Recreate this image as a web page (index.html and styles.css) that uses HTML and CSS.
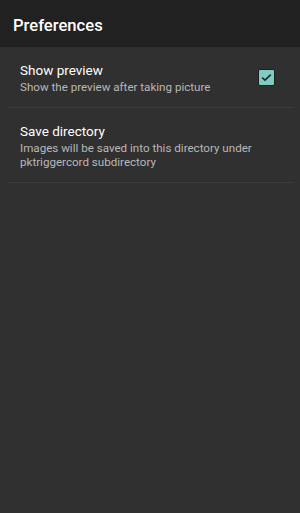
FILE: index.html
```
<!DOCTYPE html>
<html>
<head>
<meta charset="utf-8">
<link rel="stylesheet" href="styles.css">
</head>
<body>
<header class="toolbar">
  <h1 class="title">Preferences</h1>
</header>
<main class="list">
  <div class="pref">
    <div class="pref-text">
      <div class="pref-title">Show preview</div>
      <div class="pref-summary">Show the preview after taking picture</div>
    </div>
    <div class="checkbox">
      <svg width="15" height="15" viewBox="0 0 15 15"><path d="M3.2 7.6 L6 10.2 L11.8 4.6" fill="none" stroke="#1e2a28" stroke-width="1.6"/></svg>
    </div>
  </div>
  <div class="pref">
    <div class="pref-text">
      <div class="pref-title">Save directory</div>
      <div class="pref-summary">Images will be saved into this directory under pktriggercord subdirectory</div>
    </div>
  </div>
</main>
</body>
</html>
```
FILE: styles.css
```
html, body {
  margin: 0;
  padding: 0;
  height: 100%;
}
body {
  background: #303030;
  font-family: Roboto, "Noto Sans", sans-serif;
  color: #fff;
}
.toolbar {
  height: 47px;
  box-sizing: border-box;
  background: #212121;
  display: flex;
  align-items: center;
  padding: 4px 13px 0;
}
.title {
  margin: 0;
  font-size: 16.6px;
  font-weight: 500;
  color: #fff;
}
.list {
  padding: 0 7px;
}
.pref {
  display: flex;
  align-items: center;
  border-bottom: 1px solid #3c3c3c;
  padding: 14px 18px 13px 13px;
}
.pref-text {
  flex: 1;
}
.pref-title {
  font-size: 13.5px;
  line-height: 19px;
  color: #fff;
}
.pref-summary {
  font-size: 11.6px;
  line-height: 14px;
  color: #b8b8b8;
}
.checkbox {
  width: 15px;
  height: 15px;
  background: #80cbc4;
  border: 1px solid #1f1f1f;
  border-radius: 2px;
  display: flex;
  align-items: center;
  justify-content: center;
}
```
